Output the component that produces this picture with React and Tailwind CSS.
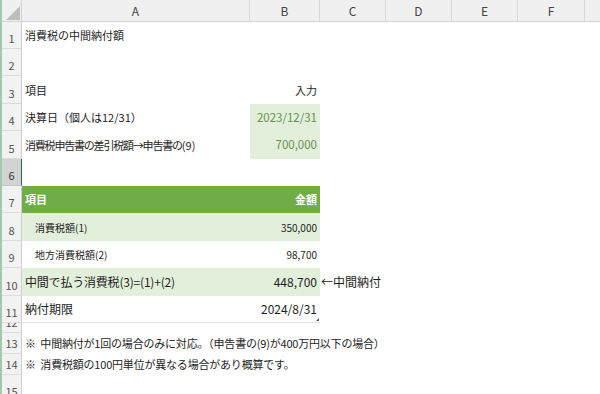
import React from 'react';

// column widths in px: A B C D E F, G takes the rest
const cols = [
  { key: 'A', w: 'w-[228px]' },
  { key: 'B', w: 'w-[70px]' },
  { key: 'C', w: 'w-[66px]' },
  { key: 'D', w: 'w-[66px]' },
  { key: 'E', w: 'w-[66px]' },
  { key: 'F', w: 'w-[67px]' },
];

function RowHead({ n, selected }) {
  return (
    <div
      className={`w-[20px] shrink-0 flex items-end justify-center overflow-hidden pb-[4px] text-[11px] leading-none border-b border-r ${
        selected
          ? 'bg-[#d3d3d3] text-[#333] border-b-[#c4c4c4] border-r-[#217346]'
          : 'bg-[#f2f2f2] text-[#555] border-b-[#dcdcdc] border-r-[#cfcfcf]'
      }`}
    >
      {n}
    </div>
  );
}

function Row({ n, h, selected, children }) {
  return (
    <div className={`flex ${h}`}>
      <RowHead n={n} selected={selected} />
      <div className="flex flex-1 items-stretch">{children}</div>
    </div>
  );
}

function CellA({ className = '', children }) {
  return (
    <div className={`w-[228px] shrink-0 flex items-center whitespace-nowrap px-[3px] ${className}`}>
      {children}
    </div>
  );
}

function CellB({ className = '', children }) {
  return (
    <div className={`w-[70px] shrink-0 flex items-center justify-end whitespace-nowrap px-[3px] ${className}`}>
      {children}
    </div>
  );
}

export default function App() {
  return (
    <div className="w-[600px] h-[394px] overflow-hidden bg-white border-l-2 border-[#a3c8ab] text-[#1e1e1e] font-['Noto_Sans_CJK_JP',sans-serif]">
      {/* column headers */}
      <div className="flex h-[22px] bg-[#f0f0f0] border-b border-[#d2d2d2]">
        <div className="w-[20px] shrink-0 relative border-r border-[#d2d2d2]">
          <svg className="absolute right-[1px] bottom-[1px]" width="14" height="14" viewBox="0 0 14 14">
            <polygon points="14,0 14,14 0,14" fill="#bdbdbd" />
          </svg>
        </div>
        {cols.map((c) => (
          <div
            key={c.key}
            className={`${c.w} shrink-0 flex items-center justify-center text-[12px] text-[#444] border-r border-[#d8d8d8]`}
          >
            {c.key}
          </div>
        ))}
        <div className="flex-1" />
      </div>

      <Row n="1" h="h-[27px]">
        <CellA className="text-[11px]">消費税の中間納付額</CellA>
      </Row>
      <Row n="2" h="h-[27px]" />
      <Row n="3" h="h-[28px]">
        <CellA className="text-[11px]">項目</CellA>
        <CellB className="text-[11px]">入力</CellB>
      </Row>
      <Row n="4" h="h-[27px]">
        <CellA className="text-[11px]">決算日（個人は12/31）</CellA>
        <CellB className="text-[11.5px] bg-[#e2efda] text-[#6a8f54]">2023/12/31</CellB>
      </Row>
      <Row n="5" h="h-[28px]">
        <CellA className="text-[11px]">
          <span className="tracking-[-1.2px]">消費税申告書の差引税額→申告書の</span>
          <span>(9)</span>
        </CellA>
        <CellB className="text-[11.5px] bg-[#e2efda] text-[#6a8f54]">700,000</CellB>
      </Row>
      <Row n="6" h="h-[27px]" selected />
      <Row n="7" h="h-[27px]">
        <CellA className="text-[11px] font-bold text-white bg-[#70ad47]">項目</CellA>
        <CellB className="text-[11px] font-bold text-white bg-[#70ad47]">金額</CellB>
      </Row>
      <Row n="8" h="h-[28px]">
        <CellA className="text-[10px] pl-[13px] bg-[#e2efda]">消費税額(1)</CellA>
        <CellB className="text-[10px] bg-[#e2efda]">350,000</CellB>
      </Row>
      <Row n="9" h="h-[27px]">
        <CellA className="text-[10px] pl-[13px]">地方消費税額(2)</CellA>
        <CellB className="text-[10px]">98,700</CellB>
      </Row>
      <Row n="10" h="h-[28px]">
        <CellA className="text-[12px] tracking-[-0.2px] bg-[#e2efda]">中間で払う消費税(3)=(1)+(2)</CellA>
        <CellB className="text-[12px] bg-[#e2efda]">448,700</CellB>
        <div className="flex items-center whitespace-nowrap pl-[1px] text-[12px]">←中間納付</div>
      </Row>
      <Row n="11" h="h-[27px]">
        <CellA className="text-[12px] border-b border-[#e4e4e4]">納付期限</CellA>
        <CellB className="text-[12px] border-b border-[#e4e4e4] relative">
          2024/8/31
          <svg className="absolute right-[1px] bottom-[1px]" width="3" height="3" viewBox="0 0 3 3">
            <polygon points="3,0 3,3 0,3" fill="#3d5c99" />
          </svg>
        </CellB>
      </Row>
      <Row n="12" h="h-[10px]" />
      <Row n="13" h="h-[21px]">
        <CellA className="text-[11px] tracking-[-0.2px] whitespace-pre">
          {'※  中間納付が1回の場合のみに対応。（申告書の(9)が400万円以下の場合）'}
        </CellA>
      </Row>
      <Row n="14" h="h-[21px]">
        <CellA className="text-[11px] tracking-[-0.2px] whitespace-pre">
          {'※  消費税額の100円単位が異なる場合があり概算です。'}
        </CellA>
      </Row>
      <Row n="15" h="h-[27px]" />
    </div>
  );
}
